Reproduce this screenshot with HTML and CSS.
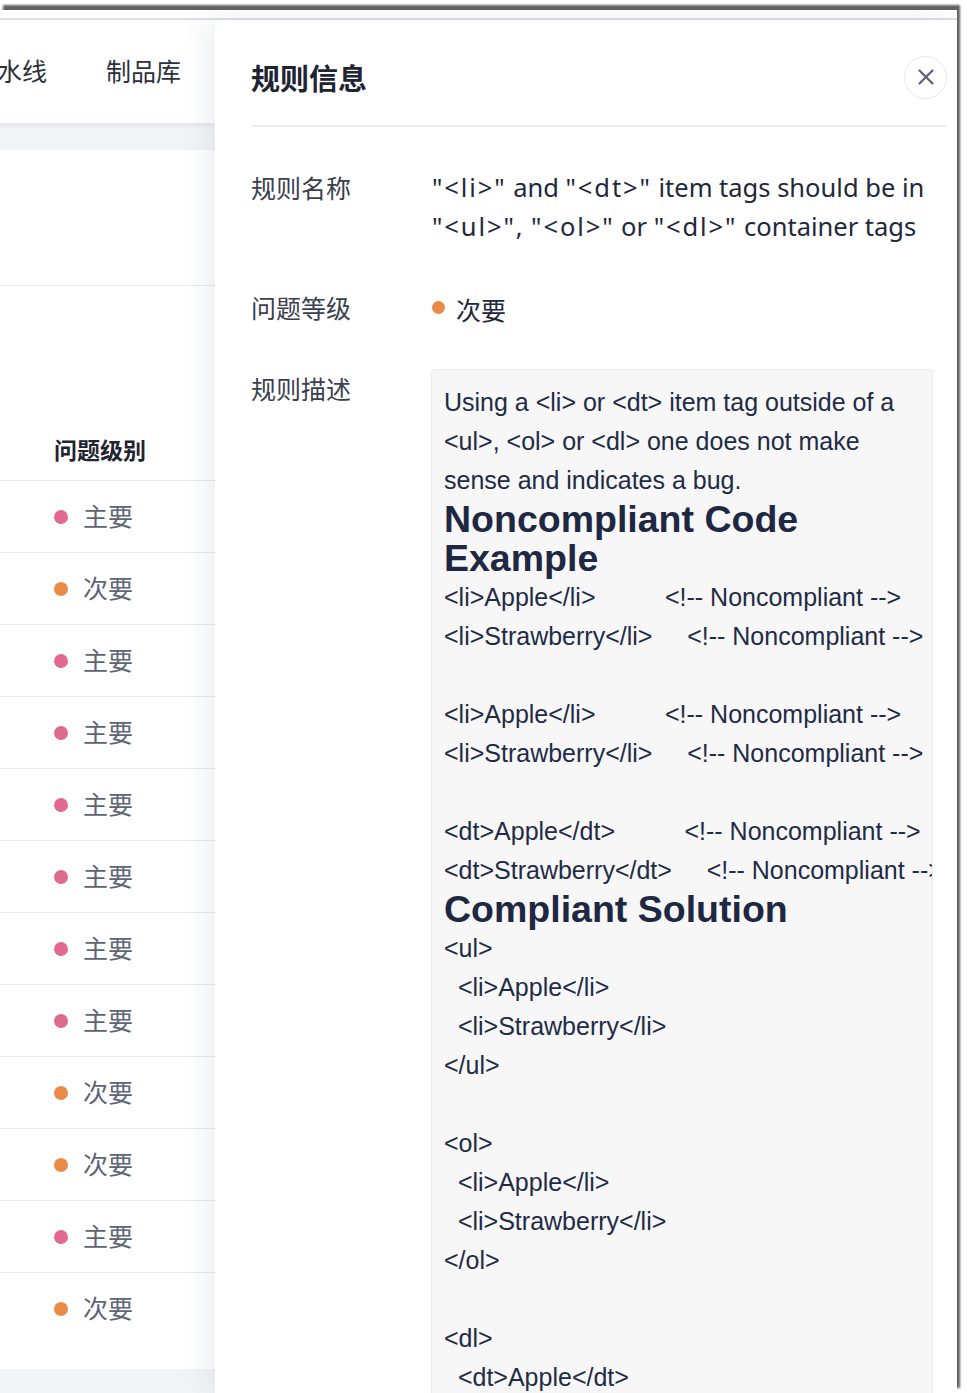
FILE: index.html
```html
<!DOCTYPE html>
<html lang="zh-CN">
<head>
<meta charset="utf-8">
<title>规则信息</title>
<link rel="stylesheet" href="styles.css">
</head>
<body>
<div class="window">
  <div class="chrome"></div>
  <div class="app">
    <div class="page">
      <nav class="nav">
        <span class="nav-item first">流水线</span>
        <span class="nav-item">制品库</span>
      </nav>
      <div class="band"></div>
      <div class="card-top"></div>
      <div class="thead"><span>问题级别</span></div>
      <div class="rows">
        <div class="row"><i class="dot major"></i><span>主要</span></div>
        <div class="row"><i class="dot minor"></i><span>次要</span></div>
        <div class="row"><i class="dot major"></i><span>主要</span></div>
        <div class="row"><i class="dot major"></i><span>主要</span></div>
        <div class="row"><i class="dot major"></i><span>主要</span></div>
        <div class="row"><i class="dot major"></i><span>主要</span></div>
        <div class="row"><i class="dot major"></i><span>主要</span></div>
        <div class="row"><i class="dot major"></i><span>主要</span></div>
        <div class="row"><i class="dot minor"></i><span>次要</span></div>
        <div class="row"><i class="dot minor"></i><span>次要</span></div>
        <div class="row"><i class="dot major"></i><span>主要</span></div>
        <div class="row"><i class="dot minor"></i><span>次要</span></div>
      </div>
      <div class="band bottom"></div>
    </div>
    <aside class="drawer">
      <header class="drawer-head">
        <h1 class="drawer-title">规则信息</h1>
        <button class="close" aria-label="关闭">
          <svg width="18" height="18" viewBox="0 0 18 18"><path d="M2.5 2.5 L15.5 15.5 M15.5 2.5 L2.5 15.5" stroke="#5b6078" stroke-width="2.2" stroke-linecap="round" fill="none"/></svg>
        </button>
      </header>
      <div class="form">
        <div class="field">
          <div class="label">规则名称</div>
          <div class="value"><span class="q">"&lt;li&gt;"</span> and <span class="q">"&lt;dt&gt;"</span> item tags should be in <span class="q">"&lt;ul&gt;",</span> <span class="q">"&lt;ol&gt;"</span> or <span class="q">"&lt;dl&gt;"</span> container tags</div>
        </div>
        <div class="field">
          <div class="label">问题等级</div>
          <div class="value level"><i class="dot minor"></i><span>次要</span></div>
        </div>
        <div class="field">
          <div class="label">规则描述</div>
          <div class="desc">
<p>Using a &lt;li&gt; or &lt;dt&gt; item tag outside of a &lt;ul&gt;, &lt;ol&gt; or &lt;dl&gt; one does not make sense and indicates a bug.</p>
<h2>Noncompliant Code Example</h2>
<pre>&lt;li&gt;Apple&lt;/li&gt;          &lt;!-- Noncompliant --&gt;
&lt;li&gt;Strawberry&lt;/li&gt;     &lt;!-- Noncompliant --&gt;

&lt;li&gt;Apple&lt;/li&gt;          &lt;!-- Noncompliant --&gt;
&lt;li&gt;Strawberry&lt;/li&gt;     &lt;!-- Noncompliant --&gt;

&lt;dt&gt;Apple&lt;/dt&gt;          &lt;!-- Noncompliant --&gt;
&lt;dt&gt;Strawberry&lt;/dt&gt;     &lt;!-- Noncompliant --&gt;</pre>
<h2>Compliant Solution</h2>
<pre>&lt;ul&gt;
  &lt;li&gt;Apple&lt;/li&gt;
  &lt;li&gt;Strawberry&lt;/li&gt;
&lt;/ul&gt;

&lt;ol&gt;
  &lt;li&gt;Apple&lt;/li&gt;
  &lt;li&gt;Strawberry&lt;/li&gt;
&lt;/ol&gt;

&lt;dl&gt;
  &lt;dt&gt;Apple&lt;/dt&gt;
  &lt;dd&gt;Juicy fruit&lt;/dd&gt;
  &lt;dt&gt;Strawberry&lt;/dt&gt;
  &lt;dd&gt;Red fruit&lt;/dd&gt;
&lt;/dl&gt;</pre>
          </div>
        </div>
      </div>
    </aside>
  </div>
</div>
</body>
</html>
```
FILE: styles.css
```css
html, body {
  margin: 0;
  padding: 0;
  background: #ffffff;
  overflow: hidden;
}

body {
  font-family: "Noto Sans", "Noto Sans CJK SC", sans-serif;
  color: #22283a;
}

.window {
  width: 957px;
  height: 1383px;
  margin-top: 10px;
  background: #ffffff;
  box-shadow: 3px -5px 2px rgba(70, 70, 70, 0.85);
  overflow: hidden;
  display: flex;
  flex-direction: column;
}

.chrome {
  height: 8px;
  flex: none;
  border-bottom: 2px solid #dedfe4;
}

.app {
  flex: 1;
  display: flex;
  min-height: 0;
}

/* ---------- underlying page ---------- */
.page {
  width: 215px;
  flex: none;
  overflow: hidden;
  display: flex;
  flex-direction: column;
  background: #ffffff;
}

.nav {
  height: 103px;
  flex: none;
  box-sizing: border-box;
  padding-bottom: 4px;
  display: flex;
  align-items: center;
  gap: 59px;
  margin-left: -28px;
  position: relative;
  z-index: 1;
  box-shadow: 0 2px 6px rgba(30, 40, 70, 0.08);
  background: #ffffff;
  white-space: nowrap;
}

.nav-item {
  font-family: "Noto Sans CJK SC", sans-serif;
  font-size: 25px;
  line-height: 36px;
  color: #2b303c;
}

.band {
  height: 27px;
  flex: none;
  background: #f3f4f7;
}

.band.bottom {
  flex: 1;
  margin-top: 24px;
}

.card-top {
  height: 136px;
  flex: none;
  box-sizing: border-box;
  border-bottom: 1px solid #e9eaee;
}

.thead {
  height: 195px;
  flex: none;
  box-sizing: border-box;
  border-bottom: 1px solid #e9eaee;
  display: flex;
  align-items: flex-end;
  padding: 0 0 13px 54px;
  font-family: "Noto Sans CJK SC", sans-serif;
  font-size: 23px;
  font-weight: 700;
  line-height: 36px;
  color: #1f2430;
}

.rows {
  flex: none;
}

.row {
  height: 72px;
  box-sizing: border-box;
  border-bottom: 1px solid #ebecf0;
  display: flex;
  align-items: center;
  padding-left: 54px;
  font-family: "Noto Sans CJK SC", sans-serif;
  font-size: 25px;
  line-height: 36px;
  color: #5d6478;
}

.row span {
  padding-bottom: 4px;
}

.row:last-child {
  border-bottom: none;
}

.dot {
  display: inline-block;
  width: 14px;
  height: 14px;
  border-radius: 50%;
  flex: none;
  margin-right: 15px;
}

.dot.major { background: #e0698e; }
.dot.minor { background: #ea8a47; }

/* ---------- drawer ---------- */
.drawer {
  flex: 1;
  min-width: 0;
  position: relative;
  z-index: 2;
  background: #ffffff;
  box-shadow: -8px 0 28px rgba(30, 40, 70, 0.08);
  padding: 0 10px 0 36px;
  display: flex;
  flex-direction: column;
}

.drawer-head {
  height: 107px;
  flex: none;
  box-sizing: border-box;
  padding-top: 9px;
  border-bottom: 2px solid #eceef1;
  display: flex;
  align-items: center;
  justify-content: space-between;
}

.drawer-title {
  margin: 0;
  font-family: "Noto Sans CJK SC", sans-serif;
  font-size: 29px;
  font-weight: 700;
  line-height: 40px;
  color: #1f2433;
}

.close {
  width: 43px;
  height: 43px;
  border-radius: 50%;
  border: 1px solid #e6e8ec;
  background: #ffffff;
  padding: 0;
  display: flex;
  align-items: center;
  justify-content: center;
}

.form {
  padding-top: 41px;
  display: flex;
  flex-direction: column;
  gap: 42px;
  min-height: 0;
}

.field {
  display: grid;
  grid-template-columns: 181px 1fr;
}

.label {
  font-family: "Noto Sans CJK SC", sans-serif;
  font-size: 25px;
  line-height: 39px;
  color: #3b4050;
}

.value {
  font-size: 25.5px;
  line-height: 39px;
  color: #22283a;
}

.value .q {
  letter-spacing: 1.9px;
  white-space: nowrap;
}

.value.level {
  height: 39px;
  display: flex;
  align-items: center;
  font-family: "Noto Sans CJK SC", sans-serif;
  font-size: 25px;
}

.value.level span {
  line-height: 36px;
  padding-top: 3px;
}

.value.level .dot {
  width: 13px;
  height: 13px;
  margin-right: 11px;
}

.desc {
  margin: 0 14px 0 -1px;
  background: #f7f7f8;
  border: 1px solid #ebebee;
  border-radius: 4px;
  padding: 13px 12px;
  overflow: hidden;
  font-family: "Liberation Sans", Arial, sans-serif;
  font-size: 25px;
  line-height: 39px;
  color: #222b45;
}

.desc p {
  margin: 0;
}

.desc h2 {
  margin: 0;
  font-size: 37.5px;
  line-height: 39px;
  font-weight: 700;
  color: #1f2842;
}

.desc pre {
  margin: 0;
  font-family: inherit;
  font-size: 25px;
  line-height: 39px;
  white-space: pre;
}
```
